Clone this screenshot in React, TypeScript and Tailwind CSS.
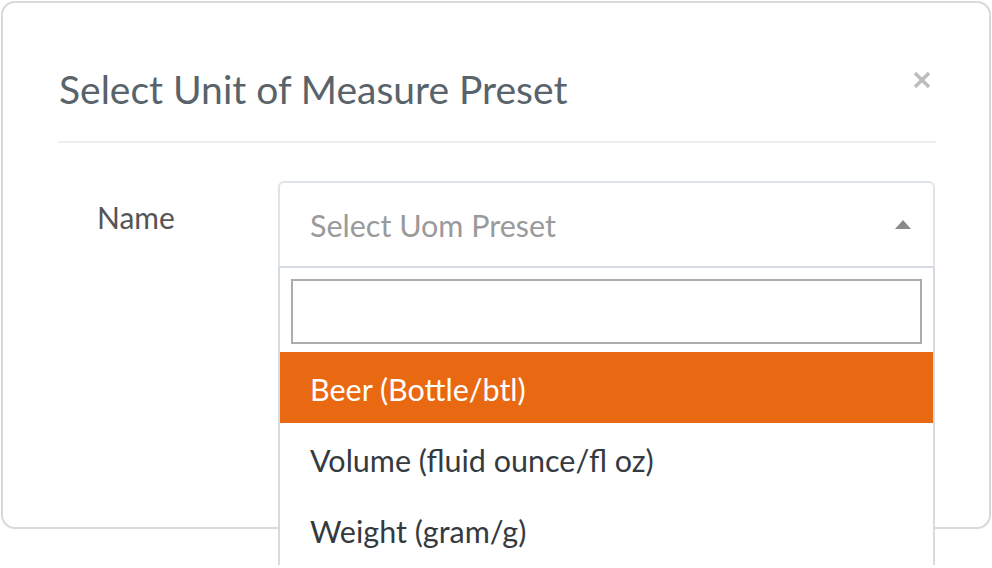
import React from "react";

export default function App() {
  return (
    <div className="w-[992px] h-[568px] bg-white overflow-hidden relative font-['Lato',sans-serif]">
      <div className="ml-px mt-px w-[990px] h-[528px] border-2 border-[#d9d9d9] rounded-[14px] pl-[55px] pr-[53px] relative">
        <div className="h-[140px] pt-[34px] flex items-center justify-between border-b-2 border-[#efefef]">
          <h1 className="text-[39px] text-[#59636b] leading-none pl-[1px]">Select Unit of Measure Preset</h1>
          <svg width="20" height="20" viewBox="0 0 20 20" className="mr-[4px] mb-[18px]">
            <path d="M3 3 L17 17 M17 3 L3 17" stroke="#bdbdbd" strokeWidth="3.5" strokeLinecap="butt" />
          </svg>
        </div>
        <div className="flex pt-[38px]">
          <div className="w-[220px] pl-[39px] pt-[21px] text-[30px] leading-none text-[#555]">Name</div>
          <div className="relative w-[657px]">
            <div className="h-[87px] border-2 border-[#dfe3ea] rounded-t-[6px] flex items-center justify-between pl-[30px] pr-[22px]">
              <span className="text-[30.5px] text-[#9a9a9a] leading-none pt-[2px]">Select Uom Preset</span>
              <svg width="16" height="9" viewBox="0 0 16 9">
                <path d="M8 0 L16 9 L0 9 Z" fill="#8a8a8a" />
              </svg>
            </div>
            <div className="absolute left-0 top-[85px] w-full bg-white border-x-2 border-t-2 border-[#d6dbe3] z-10">
              <div className="pt-[11px] px-[11px] pb-[8px]">
                <div className="h-[65px] border-2 border-[#acacac] bg-white"></div>
              </div>
              <div className="h-[71px] bg-[#e96912] text-white text-[30.5px] leading-none flex items-center pl-[30px] pt-[3px]">Beer (Bottle/btl)</div>
              <div className="h-[71px] text-[#343a40] text-[30.5px] leading-none flex items-center pl-[30px] pt-[3px]">Volume (fluid ounce/fl oz)</div>
              <div className="h-[71px] text-[#343a40] text-[30.5px] leading-none flex items-center pl-[30px] pt-[3px]">Weight (gram/g)</div>
            </div>
          </div>
        </div>
      </div>
    </div>
  );
}
